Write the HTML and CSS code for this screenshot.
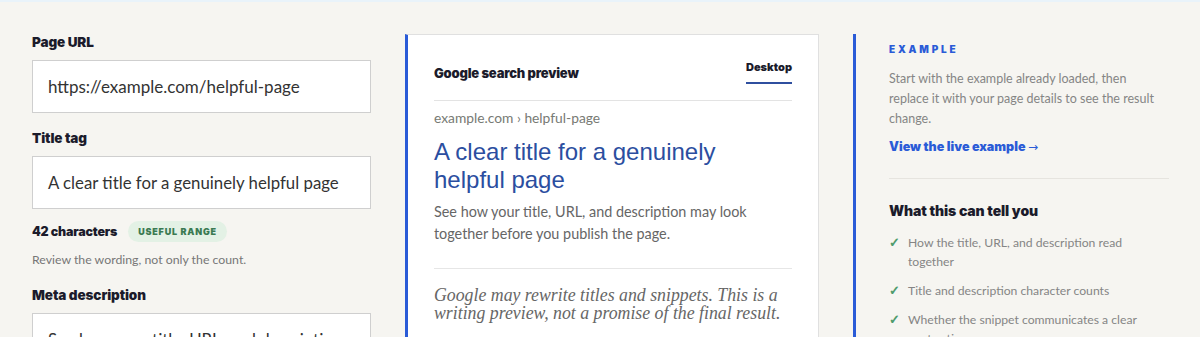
FILE: index.html
```html
<!DOCTYPE html>
<html lang="en">
<head>
<meta charset="utf-8">
<title>Google search preview</title>
<link rel="stylesheet" href="styles.css">
</head>
<body>
<div class="page">
  <section class="form">
    <div class="field">
      <label class="label">Page URL</label>
      <div class="input">https://example.com/helpful-page</div>
    </div>
    <div class="field field-title">
      <label class="label">Title tag</label>
      <div class="input input-title">A clear title for a genuinely helpful page</div>
      <div class="meta">
        <span class="count">42 characters</span>
        <span class="badge">USEFUL RANGE</span>
      </div>
      <p class="hint">Review the wording, not only the count.</p>
    </div>
    <div class="field">
      <label class="label">Meta description</label>
      <div class="input input-area">See how your title, URL, and description may look together before you publish the page.</div>
    </div>
  </section>

  <section class="card">
    <div class="card-head">
      <h2 class="card-title">Google search preview</h2>
      <span class="tab">Desktop</span>
    </div>
    <div class="serp">
      <div class="crumb">example.com › helpful-page</div>
      <div class="serp-title">A clear title for a genuinely helpful page</div>
      <p class="serp-desc">See how your title, URL, and description may look together before you publish the page.</p>
    </div>
    <p class="note">Google may rewrite titles and snippets. This is a writing preview, not a promise of the final result.</p>
  </section>

  <aside class="side">
    <div class="eyebrow">EXAMPLE</div>
    <p class="side-text">Start with the example already loaded, then replace it with your page details to see the result change.</p>
    <a class="side-link" href="#">View the live example <span class="arrow">→</span></a>
    <h3 class="side-head">What this can tell you</h3>
    <ul class="checks">
      <li><span class="tick">✓</span><span>How the title, URL, and description read together</span></li>
      <li><span class="tick">✓</span><span>Title and description character counts</span></li>
      <li><span class="tick">✓</span><span>Whether the snippet communicates a clear next action</span></li>
    </ul>
  </aside>
</div>
</body>
</html>
```
FILE: styles.css
```css
* { box-sizing: border-box; }
html, body { margin: 0; padding: 0; }
body {
  background: #f6f5f1;
  border-top: 2px solid #e9f3fa;
  font-family: Lato, "Noto Sans", sans-serif;
  color: #1c1c2b;
  height: 337px;
  overflow: hidden;
}
.page {
  display: grid;
  grid-template-columns: 339px 414px 348px;
  column-gap: 34px;
  padding: 32px 0 0 32px;
}
.label, .count, .card-title, .tab, .side-link, .side-head, .badge, .eyebrow {
  font-family: Inter, Lato, sans-serif;
  font-weight: 900;
}
.field { margin-bottom: 17px; }
.field-title { margin-bottom: 19px; }
.label {
  display: block;
  font-size: 13.5px;
  line-height: 16px;
  letter-spacing: -0.1px;
  color: #1b1b2b;
  margin-bottom: 10px;
}
.input {
  height: 53px;
  background: #fff;
  border: 1px solid #cfcfcf;
  padding: 0 15px;
  display: flex;
  align-items: center;
  font-size: 17px;
  color: #333;
  white-space: nowrap;
  overflow: hidden;
}
.input-title { font-size: 16.8px; }
.input-area {
  display: block;
  height: 80px;
  padding: 12px 15px;
  line-height: 28px;
  white-space: normal;
  font-size: 16.8px;
}
.meta {
  display: flex;
  align-items: center;
  gap: 11px;
  margin-top: 11px;
  height: 22px;
}
.count { font-size: 12.5px; color: #1b1b2b; letter-spacing: -0.2px; }
.badge {
  background: #e3f1e5;
  color: #3b7a52;
  font-size: 9px;
  letter-spacing: 0.8px;
  border-radius: 11px;
  padding: 0 10px;
  line-height: 21px;
}
.hint {
  margin: 10px 0 0;
  font-size: 12.3px;
  line-height: 16px;
  color: #777;
}
.card {
  background: #fff;
  border: 1px solid #e0e0e0;
  border-left: 3px solid #2a5bd7;
  padding: 0 26px 0 26px;
  height: 320px;
}
.card-head {
  display: flex;
  justify-content: space-between;
  align-items: center;
  padding-top: 24px;
  padding-bottom: 16px;
  border-bottom: 1px solid #e3e3e3;
}
.card-title {
  margin: 0;
  font-size: 13px;
  line-height: 16px;
  letter-spacing: -0.2px;
  color: #1b1b2b;
  padding-top: 3px;
}
.tab {
  font-size: 11px;
  line-height: 16px;
  color: #1b1b2b;
  padding-bottom: 7px;
  border-bottom: 2px solid #2f4f9f;
}
.serp { padding-bottom: 23px; border-bottom: 1px solid #e6e6e6; }
.crumb {
  margin-top: 8px;
  font-size: 13.8px;
  line-height: 18px;
  color: #777a74;
}
.serp-title {
  margin-top: 11px;
  font-family: "Liberation Sans", Arial, sans-serif;
  font-size: 24px;
  line-height: 28px;
  color: #2b4ea0;
  padding-right: 60px;
}
.serp-desc {
  margin: 7px 0 0;
  font-size: 14.4px;
  line-height: 22px;
  color: #666;
  padding-right: 20px;
}
.note {
  margin: 17px 0 0;
  font-family: "Liberation Serif", "Times New Roman", serif;
  font-style: italic;
  font-size: 17.8px;
  line-height: 18px;
  color: #666;
}
.side {
  border-left: 3px solid #2a5bd7;
  padding: 8px 32px 0 33px;
  height: 320px;
}
.eyebrow {
  font-size: 10px;
  line-height: 14px;
  letter-spacing: 2.8px;
  color: #2a5bd7;
}
.side-text {
  margin: 13px 0 0;
  font-size: 12.5px;
  line-height: 20px;
  color: #858585;
}
.side-link {
  display: block;
  margin-top: 10px;
  padding-bottom: 23px;
  border-bottom: 1px solid #e6e4df;
  font-size: 12.5px;
  line-height: 16px;
  color: #2a5bd7;
  text-decoration: none;
}
.arrow { font-family: "DejaVu Sans", sans-serif; font-weight: 400; font-size: 12px; }
.side-head {
  margin: 22px 0 0;
  font-size: 14px;
  line-height: 20px;
  letter-spacing: -0.1px;
  color: #1b1b2b;
}
.checks {
  list-style: none;
  margin: 12px 0 0;
  padding: 0;
}
.checks li {
  display: flex;
  gap: 7px;
  font-size: 12.2px;
  line-height: 19px;
  color: #858585;
  margin-bottom: 10px;
  padding-right: 30px;
}
.tick { color: #4f9b6c; font-size: 13px; font-weight: 700; width: 12px; flex: none; }
```
